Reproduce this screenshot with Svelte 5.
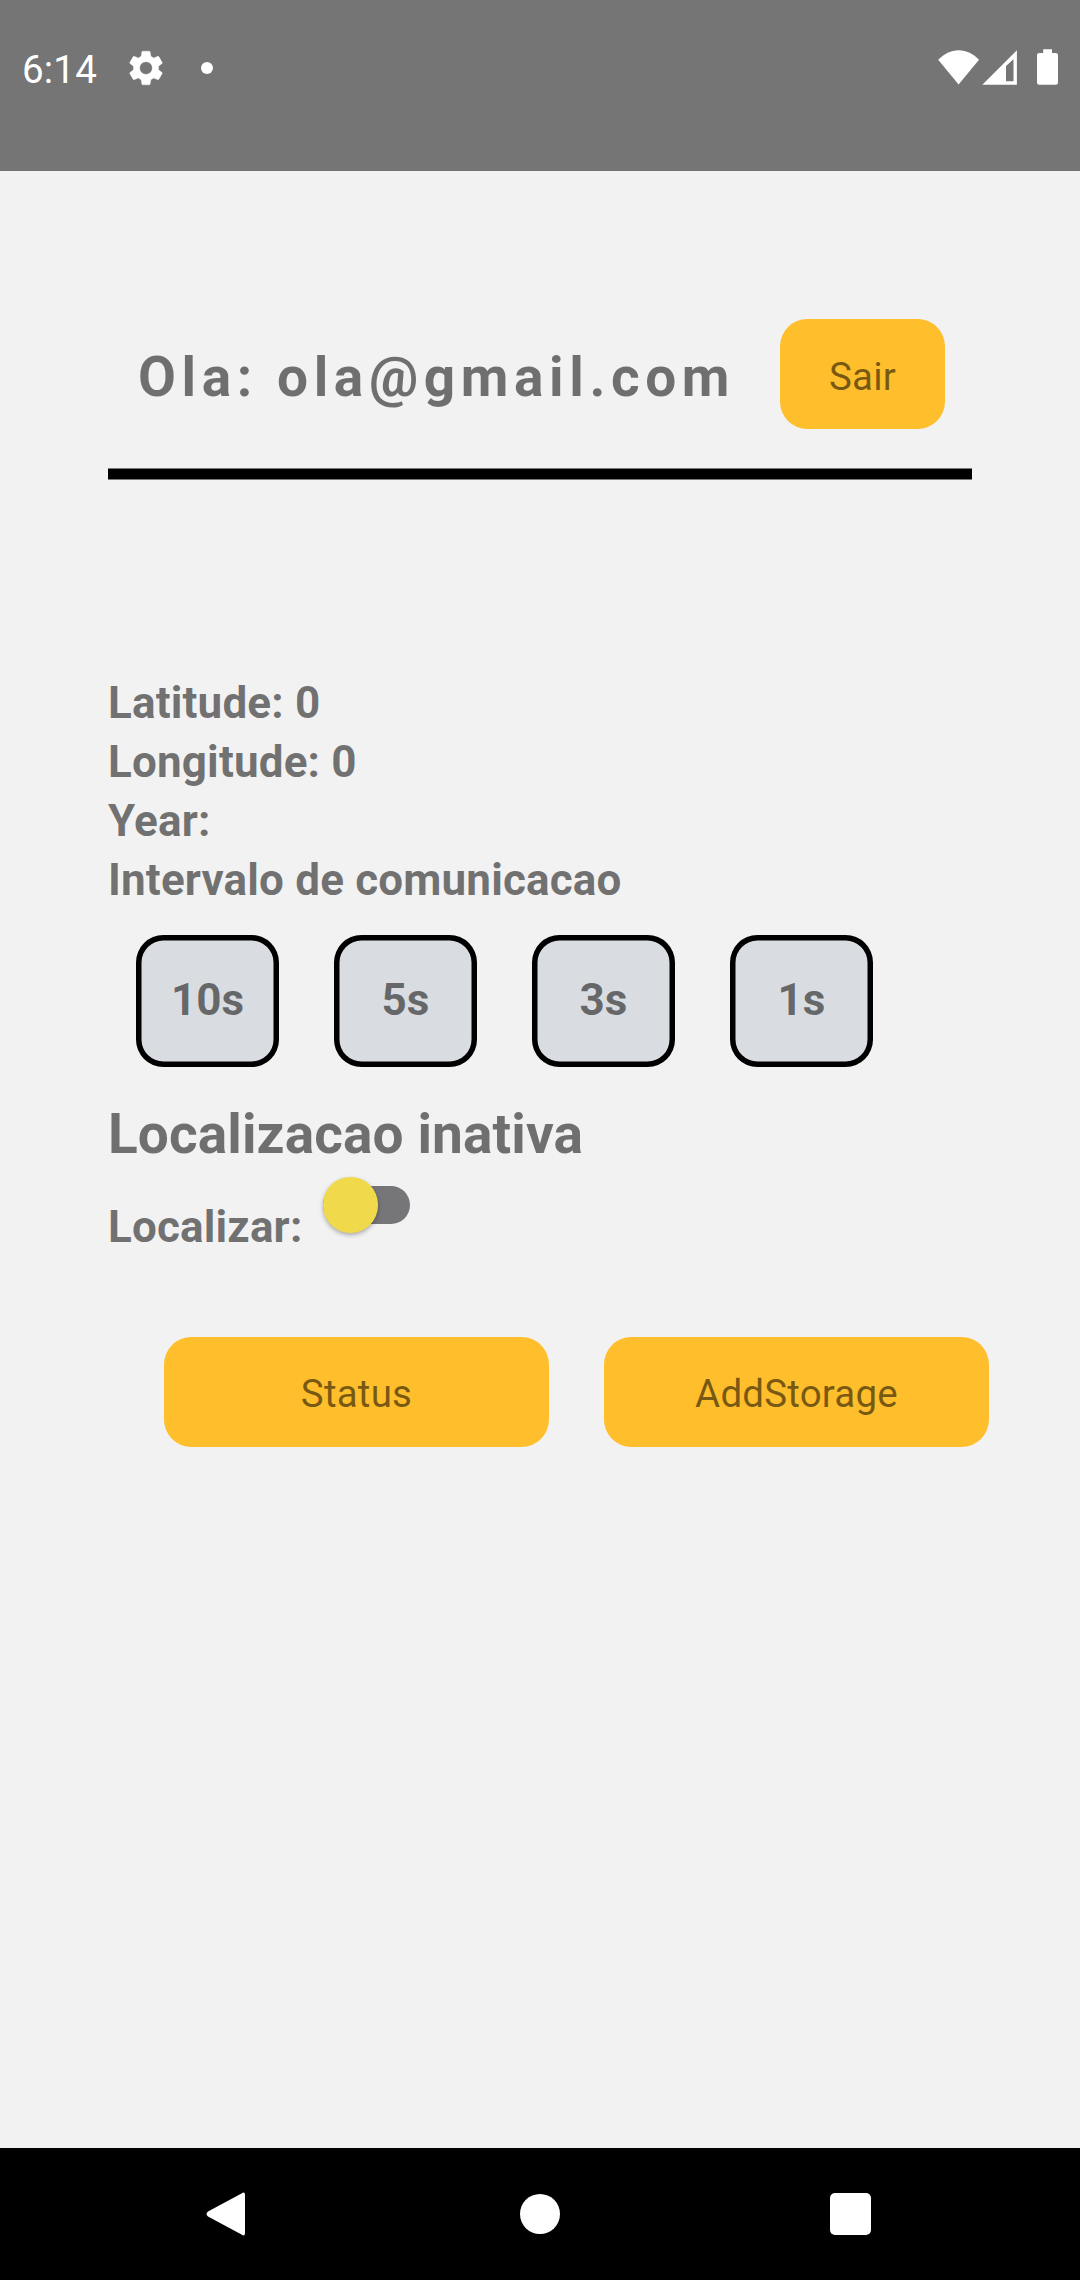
<script lang="ts">
  let email = $state('ola@gmail.com');
  let latitude = $state(0);
  let longitude = $state(0);
  let year = $state('');
  const intervals = ['10s', '5s', '3s', '1s'];
  const actions = ['Status', 'AddStorage'];
</script>

<div class="screen">
  <header class="statusbar">
    <span class="clock">6:14</span>
    <svg class="gear" viewBox="0 0 24 24" width="42" height="42">
      <path
        fill="#fff"
        stroke="#fff"
        stroke-width=".2"
        d="M19.14 12.94c.04-.3.06-.61.06-.94 0-.32-.02-.64-.07-.94l2.03-1.58c.18-.14.23-.41.12-.61l-1.92-3.32c-.12-.22-.37-.29-.59-.22l-2.39.96c-.5-.38-1.03-.7-1.62-.94l-.36-2.54c-.04-.24-.24-.41-.48-.41h-3.84c-.24 0-.43.17-.47.41l-.36 2.54c-.59.24-1.13.57-1.62.94l-2.39-.96c-.22-.08-.47 0-.59.22L2.74 8.87c-.12.21-.08.47.12.61l2.03 1.58c-.05.3-.09.63-.09.94s.02.64.07.94l-2.03 1.58c-.18.14-.23.41-.12.61l1.92 3.32c.12.22.37.29.59.22l2.39-.96c.5.38 1.03.7 1.62.94l.36 2.54c.05.24.24.41.48.41h3.84c.24 0 .44-.17.47-.41l.36-2.54c.59-.24 1.13-.56 1.62-.94l2.39.96c.22.08.47 0 .59-.22l1.92-3.32c.12-.22.07-.47-.12-.61l-2.01-1.58zM12 15.6c-1.98 0-3.6-1.62-3.6-3.6s1.62-3.6 3.6-3.6 3.6 1.62 3.6 3.6-1.62 3.6-3.6 3.6z"
      />
    </svg>
    <span class="dot"></span>
    <svg class="signals" viewBox="0 0 122 39" width="122" height="39">
      <path fill="#fff" d="M0.200 11.700C6 5.800 13 2.200 20.600 2.200S35.600 5.800 41 11.700L20.600 36.500z" />
      <path fill="#fff" fill-rule="evenodd" d="M44.300 36.700L78.900 2.200V36.700zM68 17.900V33.200H75.500V11.200z" />
      <path
        fill="#fff"
        d="M105.200 1.200h8.800v3.800h3.700q2.300 0 2.300 2.300v27.100q0 2.300-2.300 2.300h-16.400q-2.300 0-2.300-2.300V7.300q0-2.300 2.300-2.300h3.900z"
      />
    </svg>
  </header>

  <main class="content">
    <section class="top">
      <h1 class="greeting">Ola: {email}</h1>
      <button class="btn exit">Sair</button>
    </section>
    <div class="rule"></div>

    <section class="info">
      <p>Latitude: {latitude}</p>
      <p>Longitude: {longitude}</p>
      <p>Year: {year}</p>
      <p>Intervalo de comunicacao</p>
    </section>

    <div class="intervals">
      {#each intervals as label}
        <button class="interval">{label}</button>
      {/each}
    </div>

    <h2 class="state">Localizacao inativa</h2>

    <div class="locate">
      <span class="label">Localizar:</span>
      <div class="switch" role="switch" aria-checked="false" aria-label="Localizar" tabindex="0">
        <span class="thumb"></span>
      </div>
    </div>

    <div class="actions">
      {#each actions as label}
        <button class="btn action">{label}</button>
      {/each}
    </div>
  </main>

  <nav class="navbar">
    <svg viewBox="0 0 40 46" width="40" height="46">
      <path d="M35.5 2.5Q39 0 39 4V42Q39 46 35.5 43.500L2 25.500Q-1 23 2 20.500z" fill="#fff" />
    </svg>
    <span class="home"></span>
    <span class="recent"></span>
  </nav>
</div>

<style>
  :global(body) {
    margin: 0;
    background: #f2f2f2;
  }
  .screen {
    display: flex;
    flex-direction: column;
    width: 1080px;
    height: 2280px;
    overflow: hidden;
    background: #f2f2f2;
    color: rgba(0, 0, 0, 0.54);
    font-family: Roboto, 'Liberation Sans', sans-serif;
  }
  .statusbar {
    display: flex;
    align-items: center;
    box-sizing: border-box;
    height: 171px;
    padding: 0 20px 36px 22px;
    background: #757575;
    color: #fff;
  }
  .clock {
    width: 103px;
    padding-top: 5px;
    font-size: 38.5px;
    line-height: 46px;
    letter-spacing: 0.2px;
  }
  .dot {
    width: 12px;
    height: 12px;
    margin-left: 34px;
    border-radius: 50%;
    background: #fff;
  }
  .signals {
    margin-left: auto;
  }
  .content {
    flex: 1;
    padding: 148px 108px 0;
  }
  .top {
    display: flex;
    align-items: flex-start;
    justify-content: space-between;
    height: 149px;
    padding: 0 27px 0 30px;
  }
  .rule {
    height: 10px;
    border: solid #797979;
    border-width: 1px 0;
    background: #000;
  }
  h1,
  h2,
  p {
    margin: 0;
    font-weight: 700;
  }
  .greeting {
    padding-top: 21px;
    font-size: 55px;
    line-height: 74px;
    letter-spacing: 5.6px;
    white-space: nowrap;
  }
  button {
    padding: 0;
    border: 0;
    border-radius: 27.5px;
    color: inherit;
    font-family: inherit;
  }
  .btn {
    width: 385px;
    height: 110px;
    padding-top: 4px;
    background: #ffbe2b;
    font-size: 38.5px;
    letter-spacing: 0.2px;
  }
  .action {
    padding-top: 2px;
  }
  .exit {
    width: 165px;
  }
  .info {
    margin-top: 194px;
    font-size: 44px;
    line-height: 59px;
    letter-spacing: 0.16px;
  }
  .intervals {
    display: flex;
    gap: 55px;
    margin: 25px 28px 0;
  }
  .interval {
    width: 143px;
    height: 132px;
    padding-bottom: 2px;
    background: #d9dce1;
    box-shadow: inset 0 0 0 5.5px #000;
    font-size: 44px;
    font-weight: 700;
  }
  .state {
    margin-top: 30px;
    font-size: 55px;
    line-height: 74px;
    letter-spacing: 0.1px;
  }
  .locate {
    display: flex;
    align-items: flex-start;
    height: 86px;
    font-size: 44px;
    font-weight: 700;
    line-height: 59px;
    letter-spacing: 0.16px;
  }
  .label {
    width: 214.5px;
    padding-top: 27px;
  }
  .switch {
    display: flex;
    align-items: center;
    width: 87.5px;
    height: 38px;
    margin-top: 15px;
    border-radius: 19px;
    background: #767577;
  }
  .thumb {
    flex: none;
    width: 55.5px;
    height: 55.5px;
    border-radius: 50%;
    background: #f0d94a;
    box-shadow: 0 2px 4px rgba(0, 0, 0, 0.3);
  }
  .actions {
    display: flex;
    gap: 55px;
    width: 825px;
    margin: 80px 0 0 56px;
  }
  .navbar {
    display: flex;
    align-items: center;
    box-sizing: border-box;
    height: 132px;
    padding: 0 209px 0 206px;
    background: #000;
  }
  .home {
    width: 40px;
    height: 40px;
    margin: 0 270px 0 274px;
    border-radius: 50%;
    background: #fff;
  }
  .recent {
    width: 41px;
    height: 42px;
    border-radius: 5px;
    background: #fff;
  }
</style>
